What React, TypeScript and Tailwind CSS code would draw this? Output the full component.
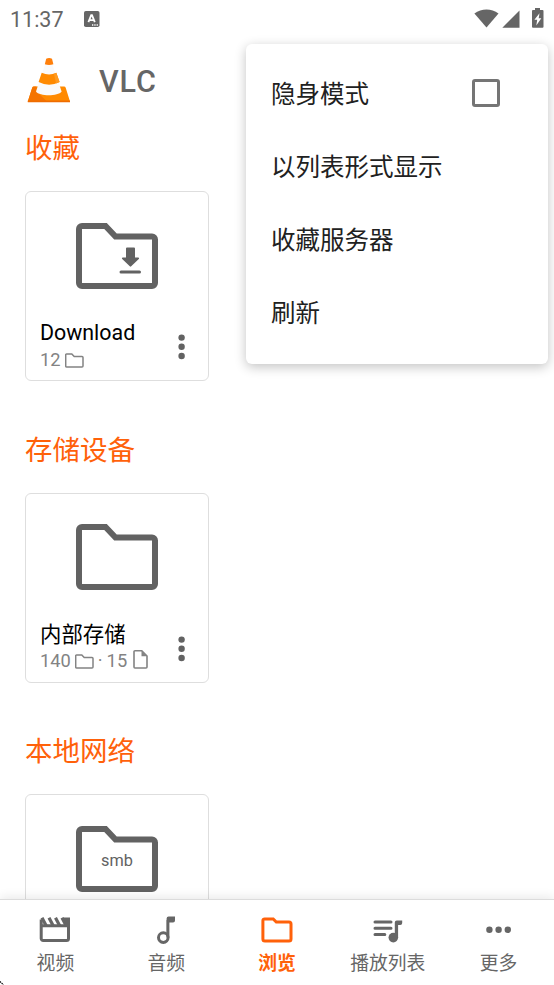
import React from 'react';

interface IconProps {
  className?: string;
}

const BigFolder = ({ children }: { children?: React.ReactNode }) => (
  <svg width="82" height="66" viewBox="0 0 82 66" className="block text-[#626262]">
    <path
      d="M6 3H29.5L39.5 13.5H76a3 3 0 0 1 3 3V60a3 3 0 0 1-3 3H6a3 3 0 0 1-3-3V6a3 3 0 0 1 3-3Z"
      fill="none"
      stroke="currentColor"
      strokeWidth="6"
    />
    {children}
  </svg>
);

const DownloadMark = () => (
  <g fill="currentColor">
    <path d="M51 24.5h7a1 1 0 0 1 1 1v9h3.2a.8.8 0 0 1 .6 1.4l-7.6 7.4a1 1 0 0 1-1.4 0l-7.6-7.4a.8.8 0 0 1 .6-1.4H50v-9a1 1 0 0 1 1-1Z" />
    <rect x="43.5" y="47.5" width="21.5" height="3" rx="1.5" />
  </g>
);

const SmallFolder = () => (
  <svg width="19" height="15" viewBox="0 0 19 15" className="block" fill="none" stroke="currentColor" strokeWidth="1.5">
    <path d="M1.5 1H6.8L9.2 3.6H17a1 1 0 0 1 1 1V13a1 1 0 0 1-1 1H1.7a1 1 0 0 1-1-1V1.8A.8.8 0 0 1 1.5 1Z" />
  </svg>
);

const SmallFile = () => (
  <svg width="15" height="19" viewBox="0 0 15 19" className="mb-[4px] block" fill="none" stroke="currentColor" strokeWidth="1.6">
    <path d="M2 .8H8.8L14 6V17a1 1 0 0 1-1 1H2a1 1 0 0 1-1-1V1.8a1 1 0 0 1 1-1Z" />
    <path d="M8.5 1v5.3H14Z" fill="currentColor" stroke="none" />
  </svg>
);

const MoreVert = () => (
  <svg width="8" height="26" viewBox="0 0 8 26" className="block" fill="#626262">
    <circle cx="3.6" cy="3.6" r="3.2" />
    <circle cx="3.6" cy="12.8" r="3.2" />
    <circle cx="3.6" cy="22" r="3.2" />
  </svg>
);

const VlcCone = () => (
  <svg width="44" height="48" viewBox="0 0 44 48" className="block">
    <path d="M7 29.5H37a1.8 1.8 0 0 1 1.7 1.2L43 44.5H.8L5.2 30.7A1.8 1.8 0 0 1 7 29.5Z" fill="#ff8a00" />
    <path d="M10 35L20 44.5H.8L5.2 30.7Q5.6 29.5 7 29.5H9.5Z" fill="#f57400" />
    <path d="M.8 43.6H43V45.2H.8Z" fill="#ef6c00" />
    <path d="M18.5 6.5h6.6L34.6 34.5C31 39.5 12.5 39.5 9 34.5Z" fill="#fafafa" />
    <path d="M19.2 1.8q2.9-1.8 5.8 0l1.4 5.4q-4.3 1.6-8.6 0Z" fill="#ff7f0a" />
    <path d="M14.7 15.8q7.4 3.6 14.6 0l3.3 9.2q-10.5 5.4-21 0Z" fill="#ff8a00" />
    <path d="M27 17l2.3-1.2 3.3 9.2-3.5 1.5Z" fill="#ff9a20" />
  </svg>
);

const VideoIcon = ({ className }: IconProps) => (
  <svg width="32" height="26" viewBox="0 0 32 26" className={className} fill="none" stroke="currentColor">
    <path d="M2.2 2.5V21.5a2 2 0 0 0 2 2H27.5a2 2 0 0 0 2-2V1M2 8.8H29" strokeWidth="3" />
    <path d="M3 .8l4.2 8M10 .8l4.2 8M16.5 .8l4.2 8M23 .8l4.2 8" strokeWidth="3.2" />
    <path d="M24 .5H31V8L27 7Z" fill="currentColor" stroke="none" />
  </svg>
);

const AudioIcon = ({ className }: IconProps) => (
  <svg width="20" height="28" viewBox="0 0 20 28" className={className} fill="none" stroke="currentColor" strokeWidth="3">
    <circle cx="7.3" cy="21.6" r="4.8" />
    <path d="M10.6 21.5V2.5a2 2 0 0 1 2-2H19V4.5a2 2 0 0 1-2 2H13Z" fill="currentColor" stroke="none" />
    <path d="M12 21.5V4" strokeWidth="2.8" />
  </svg>
);

const BrowseIcon = ({ className }: IconProps) => (
  <svg width="32" height="26" viewBox="0 0 32 26" className={className} fill="none" stroke="currentColor" strokeWidth="3">
    <path d="M3.6 1.9H12.2L15.3 5.1H28a2 2 0 0 1 2 2V22a2 2 0 0 1-2 2H3.9a2 2 0 0 1-2-2V3.6a1.7 1.7 0 0 1 1.7-1.7Z" />
  </svg>
);

const PlaylistIcon = ({ className }: IconProps) => (
  <svg width="30" height="26" viewBox="0 0 30 26" className={className} fill="none" stroke="currentColor" strokeWidth="3">
    <path d="M2 5H18M2 11.2H18M2 17.4H11.8" strokeLinecap="round" />
    <circle cx="20.3" cy="20.6" r="4.8" fill="currentColor" stroke="none" />
    <path d="M21.8 21V5.5a2 2 0 0 1 2-2h5.4V6a2 2 0 0 1-2 2H25.1V21Z" fill="currentColor" stroke="none" />
  </svg>
);

const MoreIcon = ({ className }: IconProps) => (
  <svg width="26" height="8" viewBox="0 0 26 8" className={className} fill="currentColor">
    <circle cx="3.4" cy="3.8" r="3.2" />
    <circle cx="12.6" cy="3.8" r="3.2" />
    <circle cx="21.8" cy="3.8" r="3.2" />
  </svg>
);

const StatusBar = () => (
  <div className="flex h-[38px] items-center justify-between pl-[10px] pr-[10px] text-[#666]">
    <div className="flex items-center">
      <span className="w-[74px] pt-[2px] text-[21.5px] leading-none">11:37</span>
      <svg width="16" height="16" viewBox="0 0 16 16">
        <rect width="15.5" height="16" rx="1.8" fill="currentColor" />
        <path d="M4.4 11.2L7.2 4.2h.8l2.8 7M5.5 9.2h4.2" fill="none" stroke="#fff" strokeWidth="1.8" />
        <path d="M8 14h6" stroke="#fff" strokeWidth="1.3" strokeDasharray="1.3 1" />
      </svg>
    </div>
    <div className="flex items-center">
      <svg width="25" height="20" viewBox="0 0 25 20" className="mr-[3px]">
        <path d="M.4 4.5C7.5-.8 17.5-.8 24.5 4.5L12.5 18.5Z" fill="currentColor" />
      </svg>
      <svg width="18" height="20" viewBox="0 0 18 20" className="mr-[12px]">
        <path d="M17.5 1.5v17.2H.3Z" fill="currentColor" />
      </svg>
      <svg width="12" height="20" viewBox="0 0 12 20" className="overflow-visible">
        <path d="M3 -1h5v2h2.5a1 1 0 0 1 1 1V17.7a1 1 0 0 1-1 1H1a1 1 0 0 1-1-1V2a1 1 0 0 1 1-1H3Z" fill="currentColor" />
        <path d="M7.5 4.3L2.4 10.8H5.2L4.3 16.4 9.3 9.3H6.7Z" fill="#fff" />
      </svg>
    </div>
  </div>
);

interface SectionProps {
  title: string;
  name?: string;
  info?: React.ReactNode;
  children?: React.ReactNode;
}

const Section = ({ title, name, info, children }: SectionProps) => (
  <section className="h-[301.5px] shrink-0 pl-[25px]">
    <h2 className="h-[66px] text-[27.5px] leading-[47px] text-[#ff610a]">{title}</h2>
    <div className="flex h-[190px] w-[184px] flex-col rounded-[6px] border-[1.5px] border-[#dedede] pt-[30.5px]">
      <div className="flex pl-[50px]">
        <BigFolder>{children}</BigFolder>
      </div>
      {name && (
        <div className="mt-[30.5px] flex justify-between pl-[14px] pr-[22.5px]">
          <div>
            <div className="text-[21.4px] leading-[28px] text-black">{name}</div>
            <div className="flex h-[26px] items-center text-[18.3px] leading-none text-[#838383]">{info}</div>
          </div>
          <div className="pt-[15px]">
            <MoreVert />
          </div>
        </div>
      )}
    </div>
  </section>
);

const menuItems = ['隐身模式', '以列表形式显示', '收藏服务器', '刷新'];

const OverflowMenu = () => (
  <div className="absolute left-[246px] top-[43.5px] h-[320.5px] w-[302px] rounded-[6px] bg-white pt-[13.5px] shadow-[0_3px_12px_rgba(0,0,0,0.24)]">
    {menuItems.map((item, i) => (
      <div key={item} className="flex h-[73px] items-center justify-between pl-[25px] pr-[48px] text-[24.5px] leading-none text-[#212121]">
        <span className="pt-[3px]">{item}</span>
        {i === 0 && <span className="mb-[2px] h-[28px] w-[28px] rounded-[3px] border-3 border-[#757575]" />}
      </div>
    ))}
  </div>
);

const tabs = [
  { label: '视频', icon: VideoIcon },
  { label: '音频', icon: AudioIcon },
  { label: '浏览', icon: BrowseIcon, active: true },
  { label: '播放列表', icon: PlaylistIcon },
  { label: '更多', icon: MoreIcon },
];

const BottomNav = () => (
  <nav className="relative flex h-[86px] shrink-0 border-t-[1.5px] border-[#dcdcdc] bg-white shadow-[0_-2px_10px_rgba(0,0,0,0.09)]">
    {tabs.map(({ label, icon: Icon, active }) => (
      <div key={label} className={`flex flex-1 flex-col items-center pt-[14px] ${active ? 'font-bold text-[#ff610a]' : 'text-[#666]'}`}>
        <div className="flex h-[32px] items-center">
          <Icon />
        </div>
        <span className="pt-px text-[18.8px] leading-[34px]">{label}</span>
      </div>
    ))}
    <svg width="5" height="5" viewBox="0 0 5 5" className="absolute bottom-0 left-0">
      <path d="M0 1.5L3.5 5" stroke="#000" strokeWidth="1.2" strokeDasharray="1.5 .8" />
    </svg>
  </nav>
);

export default function App() {
  return (
    <div className="relative flex h-[985px] w-[554px] flex-col overflow-hidden bg-white font-['Roboto','Noto_Sans_CJK_SC',sans-serif]">
      <StatusBar />
      <header className="flex h-[87px] shrink-0 items-start pl-[27px] pt-[19px]">
        <VlcCone />
        <h1 className="ml-[28px] text-[30.5px] font-medium leading-[50px] tracking-[0.9px] text-[#666]">VLC</h1>
      </header>
      <main className="flex min-h-0 flex-1 flex-col overflow-hidden">
        <Section
          title="收藏"
          name="Download"
          info={
            <>
              <span className="mr-[4px]">12</span>
              <SmallFolder />
            </>
          }
        >
          <DownloadMark />
        </Section>
        <Section
          title="存储设备"
          name="内部存储"
          info={
            <>
              <span className="mr-[4px]">140</span>
              <SmallFolder />
              <span className="mx-[4px]">·</span>
              <span className="mr-[6px]">15</span>
              <SmallFile />
            </>
          }
        />
        <Section title="本地网络">
          <text x="41" y="40" textAnchor="middle" fontSize="16.3" fill="currentColor">
            smb
          </text>
        </Section>
      </main>
      <BottomNav />
      <OverflowMenu />
    </div>
  );
}
